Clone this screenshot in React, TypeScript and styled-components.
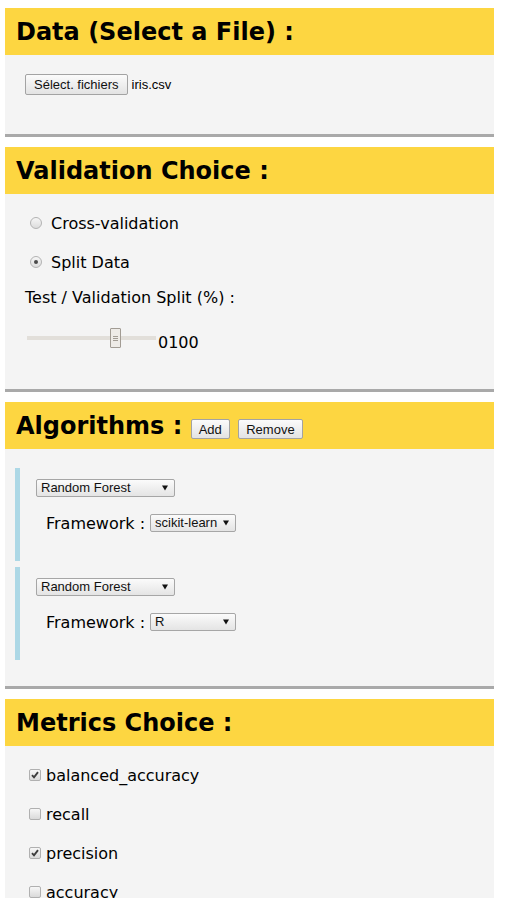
import React from "react";
import styled, { createGlobalStyle } from "styled-components";

const GlobalStyle = createGlobalStyle`
  html, body { margin: 0; padding: 0; background: #ffffff; }
  body {
    padding: 8px 0 0 5px;
    font-family: "DejaVu Sans", sans-serif;
    font-size: 16px;
    color: #000;
  }
`;

const Page = styled.div`
  width: 489px;
  display: flex;
  flex-direction: column;
  gap: 10px;
`;

const Section = styled.section`
  background: #f4f4f4;
  border-bottom: 3px solid #a9a9a9;
`;

const Header = styled.h2`
  margin: 0;
  background: #fdd641;
  font: bold 24px/28px "DejaVu Sans", sans-serif;
  padding: 10px 11px 9px;
  white-space: nowrap;
`;

const Body = styled.div<{ $h: number; $pt: number; $pl: number }>`
  box-sizing: border-box;
  height: ${(p) => p.$h}px;
  padding: ${(p) => p.$pt}px 0 0 ${(p) => p.$pl}px;
  display: flex;
  flex-direction: column;
`;

const Button = styled.button`
  display: inline-block;
  box-sizing: border-box;
  height: 20px;
  margin: 0;
  padding: 2px 7px 1px;
  font: 13px/15px "Liberation Sans", Arial, sans-serif;
  color: #111;
  background: linear-gradient(#fbfbfb, #e3e3e3);
  border: 1px solid #a3a3a3;
  border-radius: 2px;
  vertical-align: baseline;
`;

const FileButton = styled(Button)`
  height: 21px;
  padding: 2px 8px 2px;
`;

const FileRow = styled.div`
  display: flex;
  align-items: center;
  gap: 4px;
  font: 13px/15px "Liberation Sans", Arial, sans-serif;
`;

const OptionRow = styled.label<{ $mt?: number }>`
  display: flex;
  align-items: center;
  height: 20px;
  margin-top: ${(p) => p.$mt ?? 0}px;
  white-space: nowrap;
`;

const Radio = styled.span<{ $on?: boolean }>`
  box-sizing: border-box;
  width: 12px;
  height: 12px;
  margin: 0 9px 0 5px;
  border-radius: 50%;
  border: 1px solid #b3b3b3;
  background: linear-gradient(#f6f6f6, #dcdcdc);
  display: flex;
  align-items: center;
  justify-content: center;
  &::after {
    content: "";
    width: 4px;
    height: 4px;
    border-radius: 50%;
    background: #4a4a4a;
    display: ${(p) => (p.$on ? "block" : "none")};
  }
`;

const Check = styled.span<{ $on?: boolean }>`
  box-sizing: border-box;
  width: 12px;
  height: 12px;
  margin: 0 5px 0 4px;
  border-radius: 2px;
  border: 1px solid #b0b0b0;
  background: linear-gradient(#f7f7f7, #dadada);
  display: flex;
  align-items: center;
  justify-content: center;
  svg { display: ${(p) => (p.$on ? "block" : "none")}; }
`;

const FieldLabel = styled.div<{ $mt: number }>`
  margin-top: ${(p) => p.$mt}px;
  height: 20px;
  line-height: 20px;
  white-space: nowrap;
`;

const SliderRow = styled.div`
  margin-top: 20px;
  display: flex;
  align-items: flex-start;
`;

const SliderTrack = styled.div`
  position: relative;
  width: 129px;
  height: 20px;
  margin-left: 2px;
  &::before {
    content: "";
    position: absolute;
    left: 0;
    right: 0;
    top: 8px;
    height: 4px;
    background: #e2dfda;
  }
`;

const SliderThumb = styled.span<{ $left: number }>`
  position: absolute;
  top: 0;
  left: ${(p) => p.$left}px;
  box-sizing: border-box;
  width: 11px;
  height: 20px;
  border: 1px solid #a29c94;
  border-radius: 1px;
  background: #eeebe7;
  display: flex;
  flex-direction: column;
  align-items: center;
  justify-content: center;
  gap: 1px;
  i {
    display: block;
    width: 5px;
    height: 1px;
    background: #a29c94;
  }
`;

const SliderValue = styled.span`
  margin-left: 2px;
  padding-top: 5px;
  line-height: 20px;
`;

const AlgoList = styled.div`
  display: flex;
  flex-direction: column;
  gap: 6px;
`;

const AlgoBlock = styled.div`
  box-sizing: border-box;
  height: 93px;
  border-left: 5px solid #add8e6;
  padding: 11px 0 0 16px;
  display: flex;
  flex-direction: column;
  align-items: flex-start;
`;

const FrameworkRow = styled.div`
  margin: 17px 0 0 10px;
  display: flex;
  align-items: center;
  gap: 5px;
  white-space: nowrap;
  height: 18px;
`;

const Select = styled.span<{ $w: number }>`
  box-sizing: border-box;
  width: ${(p) => p.$w}px;
  height: 18px;
  padding: 0 6px 0 4px;
  border: 1px solid #a6a6a6;
  border-radius: 2px;
  background: linear-gradient(#fbfbfb, #e4e4e4);
  display: flex;
  align-items: center;
  justify-content: space-between;
  font: 13px/16px "Liberation Sans", Arial, sans-serif;
  color: #111;
  svg { flex: none; }
`;

const Arrow = () => (
  <svg width="6" height="6" viewBox="0 0 6 6">
    <path d="M0 0.5 H6 L3 5.5 Z" fill="#111" />
  </svg>
);

const CheckMark = () => (
  <svg width="8" height="8" viewBox="0 0 8 8">
    <path d="M1 4.2 L3 6.3 L7 1.2" stroke="#3d3d3d" strokeWidth="1.9" fill="none" />
  </svg>
);

const AlgoSelect = ({ fw }: { fw: string }) => (
  <AlgoBlock>
    <Select $w={139}>
      <span>Random Forest</span>
      <Arrow />
    </Select>
    <FrameworkRow>
      <span>Framework :</span>
      <Select $w={86}>
        <span>{fw}</span>
        <Arrow />
      </Select>
    </FrameworkRow>
  </AlgoBlock>
);

const metrics = [
  { name: "balanced_accuracy", on: true },
  { name: "recall", on: false },
  { name: "precision", on: true },
  { name: "accuracy", on: false },
];

export default function App() {
  return (
    <>
      <GlobalStyle />
      <Page>
        <Section>
          <Header>Data (Select a File) :</Header>
          <Body $h={79} $pt={19} $pl={20}>
            <FileRow>
              <FileButton>Sélect. fichiers</FileButton>
              <span>iris.csv</span>
            </FileRow>
          </Body>
        </Section>

        <Section>
          <Header>Validation Choice :</Header>
          <Body $h={195} $pt={19} $pl={20}>
            <OptionRow>
              <Radio />
              Cross-validation
            </OptionRow>
            <OptionRow $mt={19}>
              <Radio $on />
              Split Data
            </OptionRow>
            <FieldLabel $mt={16}>Test / Validation Split (%) :</FieldLabel>
            <SliderRow>
              <SliderTrack>
                <SliderThumb $left={83}>
                  <i />
                  <i />
                  <i />
                </SliderThumb>
              </SliderTrack>
              <SliderValue>0100</SliderValue>
            </SliderRow>
          </Body>
        </Section>

        <Section>
          <Header>
            Algorithms : <Button>Add</Button> <Button>Remove</Button>
          </Header>
          <Body $h={237} $pt={19} $pl={10}>
            <AlgoList>
              <AlgoSelect fw="scikit-learn" />
              <AlgoSelect fw="R" />
            </AlgoList>
          </Body>
        </Section>

        <Section>
          <Header>Metrics Choice :</Header>
          <Body $h={200} $pt={19} $pl={20}>
            {metrics.map((m, i) => (
              <OptionRow key={m.name} $mt={i === 0 ? 0 : 19}>
                <Check $on={m.on}>
                  <CheckMark />
                </Check>
                {m.name}
              </OptionRow>
            ))}
          </Body>
        </Section>
      </Page>
    </>
  );
}
